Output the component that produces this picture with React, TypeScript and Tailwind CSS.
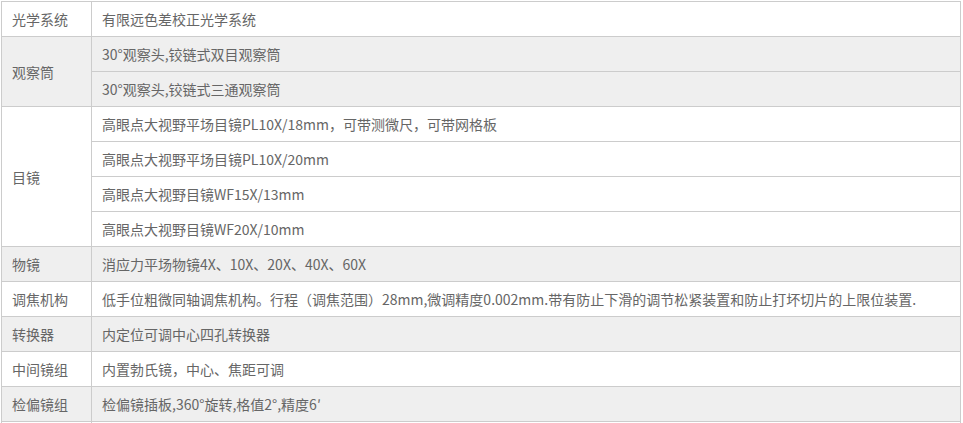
import React from 'react';

type Row = { label?: string; span?: number; value: string; grey: boolean };

const rows: Row[] = [
  { label: '光学系统', value: '有限远色差校正光学系统', grey: false },
  { label: '观察筒', span: 2, value: '30°观察头,铰链式双目观察筒', grey: true },
  { value: '30°观察头,铰链式三通观察筒', grey: true },
  { label: '目镜', span: 4, value: '高眼点大视野平场目镜PL10X/18mm，可带测微尺，可带网格板', grey: false },
  { value: '高眼点大视野平场目镜PL10X/20mm', grey: false },
  { value: '高眼点大视野目镜WF15X/13mm', grey: false },
  { value: '高眼点大视野目镜WF20X/10mm', grey: false },
  { label: '物镜', value: '消应力平场物镜4X、10X、20X、40X、60X', grey: true },
  {
    label: '调焦机构',
    value: '低手位粗微同轴调焦机构。行程（调焦范围）28mm,微调精度0.002mm.带有防止下滑的调节松紧装置和防止打坏切片的上限位装置.',
    grey: false,
  },
  { label: '转换器', value: '内定位可调中心四孔转换器', grey: true },
  { label: '中间镜组', value: '内置勃氏镜，中心、焦距可调', grey: false },
  { label: '检偏镜组', value: '检偏镜插板,360°旋转,格值2°,精度6′', grey: true },
  { label: '', value: '', grey: false },
];

export default function App() {
  return (
    <div
      className="min-h-screen bg-white pl-px pt-px text-[14px] text-[#666]"
      style={{ fontFamily: '"Noto Sans CJK SC", "Noto Sans", sans-serif' }}
    >
      <table className="w-[960px] border-collapse">
        <tbody>
          {rows.map((r, i) => (
            <tr key={i} className={r.grey ? 'bg-[#efefef]' : 'bg-white'}>
              {r.label !== undefined && (
                <td
                  rowSpan={r.span ?? 1}
                  className="w-[90px] border border-[#ccc] pl-[10px] leading-none"
                >
                  {r.label}
                </td>
              )}
              <td className="h-[35px] border border-[#ccc] pl-[10px] leading-none">{r.value}</td>
            </tr>
          ))}
        </tbody>
      </table>
    </div>
  );
}
